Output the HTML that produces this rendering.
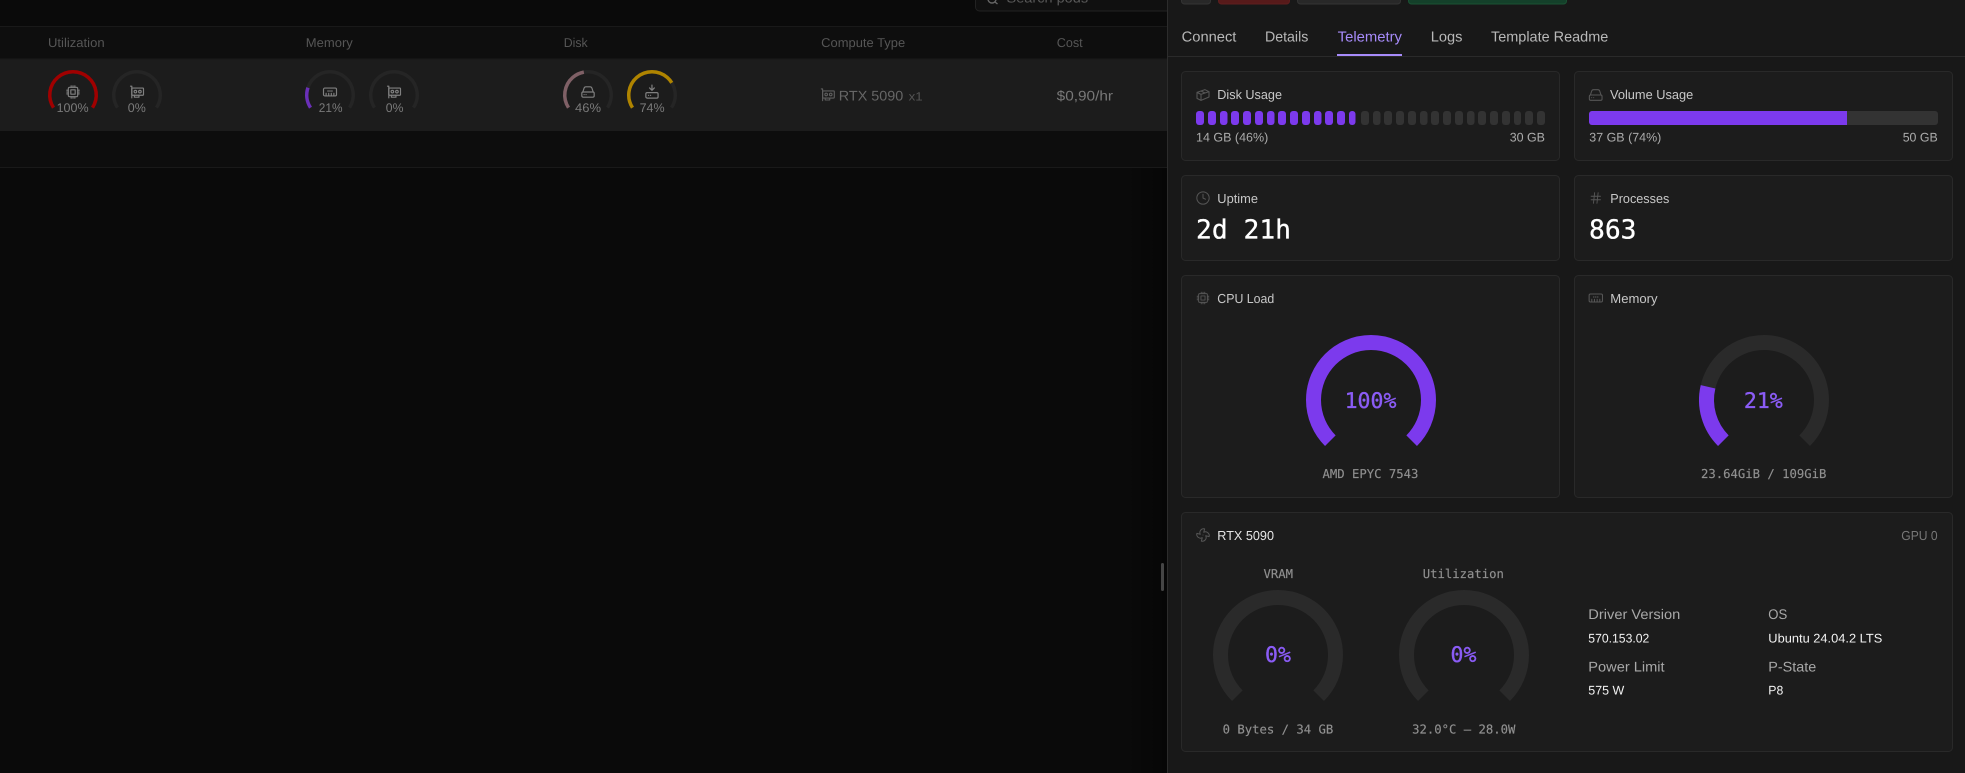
<!DOCTYPE html>
<html lang="en">
<head>
<meta charset="utf-8">
<title>Pod Telemetry</title>
<style>
html,body{margin:0;padding:0;background:#0a0a0a;width:1965px;height:773px;overflow:hidden}
svg{display:block}
text{font-family:"Liberation Sans",sans-serif;text-rendering:geometricPrecision}
.m{font-family:"DejaVu Sans Mono","Liberation Mono",monospace}
.th{font-size:12.8px;fill:#565656}
.pc{font-size:12.5px;fill:#7a7a7a}
.tab{font-size:14.5px;fill:#b8b8b8}
.ttl{font-size:13px;fill:#c8c8c8}
.sub{font-size:12.5px;fill:#ababab}
.val{font-size:26.3px;fill:#fff;stroke:#fff;stroke-width:.3px}
.gv{font-size:21.5px;fill:#8b5cf6;stroke:#8b5cf6;stroke-width:.35px;text-anchor:middle}
.gl{font-size:12.25px;fill:#909090;stroke:#909090;stroke-width:.15px;text-anchor:middle}
.il{font-size:14px;fill:#a8a8a8}
.iv{font-size:12.5px;fill:#f2f2f2}
.card{fill:#1c1c1c;stroke:#292929;stroke-width:1}
.ic{fill:none;stroke-linecap:round;stroke-linejoin:round}
.ir{stroke:#808080;stroke-width:1.8}
.it{stroke:#565656;stroke-width:1.6}
.a{fill:none;stroke-width:3.5}
.A{fill:none;stroke-width:15}
</style>
</head>
<body>
<svg xmlns="http://www.w3.org/2000/svg" width="1965" height="773" viewBox="0 0 1965 773">
<defs>
<g id="cpu"><rect x="4.500" y="4.500" width="15" height="15" rx="2"/><rect x="8.500" y="8.500" width="7" height="7"/><path d="M9 2v2.500M12 2v2.500M15 2v2.500M9 19.500V22M12 19.500V22M15 19.500V22M2 9h2.500M2 12h2.500M2 15h2.500M19.500 9H22M19.500 12H22M19.500 15H22"/></g>
<g id="gpu"><path d="M2 3h2v18"/><rect x="4" y="6" width="18" height="11" rx="1"/><circle cx="9.500" cy="11.500" r="2"/><circle cx="16.500" cy="11.500" r="2"/><path d="M8 17v3h7v-3"/></g>
<g id="mem"><rect x="2" y="6" width="20" height="12" rx="2"/><path d="M6 14v4M10 14v4M14 14v4M18 14v4M9 10v1M12 10v1M15 10v1"/></g>
<g id="hdd"><rect x="2.500" y="12" width="19" height="8" rx="2"/><path d="M4 12l2-6a3 3 0 0 1 3-2h6a3 3 0 0 1 3 2l2 6"/><path d="M6 16h.01M9 16h.01"/></g>
<g id="vol"><path d="M12 2v7M8.500 6l3.500 3.500L15.500 6"/><rect x="3" y="13" width="18" height="8" rx="2"/><path d="M7 17h.01M10 17h.01"/></g>
<g id="box"><path d="M3 8l12-4 6 3v8L9 20l-6-3zM3 8l6 3 12-4M9 11v9M9 6l6 3"/></g>
<g id="clock"><circle cx="12" cy="12" r="10"/><path d="M12 6v6l4 2"/></g>
<g id="hash"><path d="M4 9h16M4 15h16M10 3L8 21M16 3l-2 18"/></g>
<g id="fan"><path d="M10.827 16.379a6.082 6.082 0 0 1-8.618-7.002l5.412 1.45a6.082 6.082 0 0 1 7.002-8.618l-1.45 5.412a6.082 6.082 0 0 1 8.618 7.002l-5.412-1.45a6.082 6.082 0 0 1-7.002 8.618l1.45-5.412Z"/><path d="M12 12v.01"/></g>
<linearGradient id="sh" x1="0" x2="1" y1="0" y2="0"><stop offset="0" stop-color="#000" stop-opacity="0"/><stop offset="1" stop-color="#000" stop-opacity=".4"/></linearGradient>
</defs>

<!-- left background -->
<rect x="0" y="0" width="1167" height="773" fill="#0a0a0a"/>
<rect x="0" y="26" width="1167" height="33" fill="#0e0e0e"/>
<rect x="0" y="59" width="1167" height="72" fill="#1c1c1c"/>
<rect x="0" y="131" width="1167" height="36" fill="#0d0d0d"/>
<path d="M0 26.500H1167M0 59H1167M0 167.500H1167" stroke="#191919" stroke-width="1"/>

<!-- search -->
<rect x="975.500" y="-12" width="200" height="23" rx="4" fill="#101010" stroke="#222"/>
<circle cx="992" cy="-1" r="4" fill="none" stroke="#666" stroke-width="1.400"/>
<path d="M995 2l2.500 2" stroke="#666" stroke-width="1.400" fill="none"/>
<text x="1006.500" y="2.500" font-size="14" fill="#585858" textLength="81.600" lengthAdjust="spacingAndGlyphs">Search pods</text>

<!-- table headers -->
<text class="th" x="48" y="46.800" textLength="56.600" lengthAdjust="spacingAndGlyphs">Utilization</text>
<text class="th" x="305.800" y="46.800" textLength="47" lengthAdjust="spacingAndGlyphs">Memory</text>
<text class="th" x="563.700" y="46.800" textLength="24" lengthAdjust="spacingAndGlyphs">Disk</text>
<text class="th" x="821.200" y="46.800" textLength="84" lengthAdjust="spacingAndGlyphs">Compute Type</text>
<text class="th" x="1056.700" y="46.800" textLength="26" lengthAdjust="spacingAndGlyphs">Cost</text>

<!-- small gauges -->
<g>
<path class="a" stroke="#252525" d="M53.500 107.660A23.250 23.250 0 1 1 92.500 107.660"/>
<path class="a" stroke="#a00000" d="M53.500 107.660A23.250 23.250 0 1 1 92.500 107.660"/>
<path class="a" stroke="#252525" d="M117.500 107.660A23.250 23.250 0 1 1 156.500 107.660"/>
<path class="a" stroke="#252525" d="M310.500 107.660A23.250 23.250 0 1 1 349.500 107.660"/>
<path class="a" stroke="#6a2fb8" pathLength="100" stroke-dasharray="21 200" d="M310.500 107.660A23.250 23.250 0 1 1 349.500 107.660"/>
<path class="a" stroke="#252525" d="M374.500 107.660A23.250 23.250 0 1 1 413.500 107.660"/>
<path class="a" stroke="#252525" d="M568.500 107.660A23.250 23.250 0 1 1 607.500 107.660"/>
<path class="a" stroke="#7f6066" pathLength="100" stroke-dasharray="46 200" d="M568.500 107.660A23.250 23.250 0 1 1 607.500 107.660"/>
<path class="a" stroke="#252525" d="M632.500 107.660A23.250 23.250 0 1 1 671.500 107.660"/>
<path class="a" stroke="#af8400" pathLength="100" stroke-dasharray="74 200" d="M632.500 107.660A23.250 23.250 0 1 1 671.500 107.660"/>
</g>
<g class="ic ir">
<use href="#cpu" transform="translate(65.500 84.500) scale(.625)"/>
<use href="#gpu" transform="translate(129.200 84.200) scale(.65)"/>
<use href="#mem" transform="translate(322.200 84.200) scale(.65)"/>
<use href="#gpu" transform="translate(386.200 84.200) scale(.65)"/>
<use href="#hdd" transform="translate(580.200 84.200) scale(.65)"/>
<use href="#vol" transform="translate(643.800 83.800) scale(.68)"/>
</g>
<text class="pc" x="56.600" y="112" textLength="32" lengthAdjust="spacingAndGlyphs">100%</text>
<text class="pc" x="127.800" y="112" textLength="18" lengthAdjust="spacingAndGlyphs">0%</text>
<text class="pc" x="318.800" y="112" textLength="23.700" lengthAdjust="spacingAndGlyphs">21%</text>
<text class="pc" x="385.800" y="112" textLength="17.600" lengthAdjust="spacingAndGlyphs">0%</text>
<text class="pc" x="575" y="112" textLength="26" lengthAdjust="spacingAndGlyphs">46%</text>
<text class="pc" x="639.600" y="112" textLength="25" lengthAdjust="spacingAndGlyphs">74%</text>

<!-- compute / cost -->
<g class="ic" stroke="#5e5e5e" stroke-width="1.700"><use href="#gpu" transform="translate(820 87) scale(.65)"/></g>
<text x="838.800" y="100.300" font-size="14" fill="#666" textLength="64.500" lengthAdjust="spacingAndGlyphs">RTX 5090</text>
<text x="908.600" y="100.300" font-size="12" fill="#545454" textLength="14" lengthAdjust="spacingAndGlyphs">x1</text>
<text x="1056.700" y="100.300" font-size="14" fill="#787878" textLength="56.300" lengthAdjust="spacingAndGlyphs">$0,90/hr</text>

<!-- shadow + handle -->
<rect x="1125" y="168" width="42" height="605" fill="url(#sh)"/>
<rect x="1161" y="563" width="3" height="28" rx="1.500" fill="#454545"/>

<!-- right panel -->
<rect x="1167" y="0" width="798" height="773" fill="#181818"/>
<path d="M1167.500 0V773" stroke="#2c2c2c"/>
<path d="M1168 56.500H1965" stroke="#2a2a2a"/>

<!-- top buttons -->
<rect x="1181.500" y="-6" width="29" height="10" rx="3" fill="#282828" stroke="#333"/>
<rect x="1218.500" y="-6" width="71" height="10" rx="3" fill="#571a1a" stroke="#5f1e1e"/>
<rect x="1297.500" y="-6" width="103" height="10" rx="3" fill="#282828" stroke="#333"/>
<rect x="1408.500" y="-6" width="158" height="10" rx="3" fill="#14402a" stroke="#1a5233"/>

<!-- tabs -->
<text class="tab" x="1181.700" y="41.700" textLength="54.700" lengthAdjust="spacingAndGlyphs">Connect</text>
<text class="tab" x="1265" y="41.700" textLength="43.300" lengthAdjust="spacingAndGlyphs">Details</text>
<text class="tab" x="1337.700" y="41.700" textLength="64.300" lengthAdjust="spacingAndGlyphs" style="fill:#a78bfa">Telemetry</text>
<text class="tab" x="1430.700" y="41.700" textLength="31.700" lengthAdjust="spacingAndGlyphs">Logs</text>
<text class="tab" x="1491" y="41.700" textLength="117.300" lengthAdjust="spacingAndGlyphs">Template Readme</text>
<rect x="1337" y="54" width="65" height="2" fill="#a78bfa"/>

<!-- cards -->
<rect class="card" x="1181.500" y="71.500" width="378" height="89" rx="4"/>
<rect class="card" x="1574.500" y="71.500" width="378" height="89" rx="4"/>
<rect class="card" x="1181.500" y="175.500" width="378" height="85" rx="4"/>
<rect class="card" x="1574.500" y="175.500" width="378" height="85" rx="4"/>
<rect class="card" x="1181.500" y="275.500" width="378" height="222" rx="4"/>
<rect class="card" x="1574.500" y="275.500" width="378" height="222" rx="4"/>
<rect class="card" x="1181.500" y="512.500" width="771" height="239" rx="4"/>

<!-- card icons -->
<g class="ic it">
<use href="#box" transform="translate(1195 87) scale(.667)"/>
<use href="#hdd" transform="translate(1587.700 87) scale(.667)"/>
<use href="#clock" transform="translate(1195.600 190.600) scale(.617)"/>
<use href="#hash" transform="translate(1588.800 191) scale(.583)"/>
<use href="#cpu" transform="translate(1196 291) scale(.583)"/>
<use href="#mem" transform="translate(1587.800 290) scale(.667)"/>
<use href="#fan" transform="translate(1195.500 527.500) scale(.625)"/>
</g>

<!-- titles -->
<text class="ttl" x="1217.300" y="98.800" textLength="64.700" lengthAdjust="spacingAndGlyphs">Disk Usage</text>
<text class="ttl" x="1610" y="98.800" textLength="83.300" lengthAdjust="spacingAndGlyphs">Volume Usage</text>
<text class="ttl" x="1217.300" y="202.800" textLength="40.700" lengthAdjust="spacingAndGlyphs">Uptime</text>
<text class="ttl" x="1610.300" y="202.800" textLength="59" lengthAdjust="spacingAndGlyphs">Processes</text>
<text class="ttl" x="1217.300" y="302.800" textLength="57" lengthAdjust="spacingAndGlyphs">CPU Load</text>
<text class="ttl" x="1610.300" y="302.800" textLength="47.300" lengthAdjust="spacingAndGlyphs">Memory</text>
<text class="ttl" x="1217.300" y="539.800" textLength="56.700" lengthAdjust="spacingAndGlyphs" style="fill:#e4e4e4">RTX 5090</text>
<text x="1901.300" y="539.800" font-size="13" fill="#777" textLength="36.300" lengthAdjust="spacingAndGlyphs">GPU 0</text>

<!-- disk segmented bar -->
<g fill="#7c3aed">
<rect x="1196" y="111" width="8" height="14" rx="3"/><rect x="1208" y="111" width="8" height="14" rx="3"/><rect x="1220" y="111" width="7.500" height="14" rx="3"/><rect x="1231" y="111" width="8" height="14" rx="3"/><rect x="1243" y="111" width="8" height="14" rx="3"/><rect x="1255" y="111" width="8" height="14" rx="3"/><rect x="1267" y="111" width="7.500" height="14" rx="3"/><rect x="1278" y="111" width="8" height="14" rx="3"/><rect x="1290" y="111" width="8" height="14" rx="3"/><rect x="1302" y="111" width="8" height="14" rx="3"/><rect x="1314" y="111" width="7.500" height="14" rx="3"/><rect x="1325" y="111" width="8" height="14" rx="3"/><rect x="1337" y="111" width="8" height="14" rx="3"/><rect x="1349" y="111" width="6.500" height="14" rx="3"/>
</g>
<g fill="#333">
<rect x="1361" y="111" width="8" height="14" rx="3"/><rect x="1373" y="111" width="7.500" height="14" rx="3"/><rect x="1384" y="111" width="8" height="14" rx="3"/><rect x="1396" y="111" width="8" height="14" rx="3"/><rect x="1408" y="111" width="8" height="14" rx="3"/><rect x="1420" y="111" width="7.500" height="14" rx="3"/><rect x="1431" y="111" width="8" height="14" rx="3"/><rect x="1443" y="111" width="8" height="14" rx="3"/><rect x="1455" y="111" width="8" height="14" rx="3"/><rect x="1467" y="111" width="7.500" height="14" rx="3"/><rect x="1478" y="111" width="8" height="14" rx="3"/><rect x="1490" y="111" width="8" height="14" rx="3"/><rect x="1502" y="111" width="8" height="14" rx="3"/><rect x="1514" y="111" width="7" height="14" rx="3"/><rect x="1525" y="111" width="8" height="14" rx="3"/><rect x="1537" y="111" width="8" height="14" rx="3"/>
</g>
<text class="sub" x="1196" y="141.300" textLength="72.300" lengthAdjust="spacingAndGlyphs">14 GB (46%)</text>
<text class="sub" x="1509.700" y="141.300" textLength="35.300" lengthAdjust="spacingAndGlyphs">30 GB</text>

<!-- volume bar -->
<rect x="1589" y="111" width="349" height="14" rx="3" fill="#333"/>
<path d="M1592 111H1847V125H1592a3 3 0 0 1-3-3V114a3 3 0 0 1 3-3z" fill="#7c3aed"/>
<text class="sub" x="1589.300" y="141.300" textLength="72" lengthAdjust="spacingAndGlyphs">37 GB (74%)</text>
<text class="sub" x="1902.700" y="141.300" textLength="35" lengthAdjust="spacingAndGlyphs">50 GB</text>

<!-- values -->
<text class="m val" x="1196" y="238.300">2d 21h</text>
<text class="m val" x="1589" y="238.300">863</text>

<!-- big gauges -->
<path class="A" stroke="#7c3aed" d="M1330.340 440.660A57.500 57.500 0 1 1 1411.660 440.660"/>
<text class="m gv" x="1370.500" y="407.900">100%</text>
<text class="m gl" x="1370.500" y="478">AMD EPYC 7543</text>

<path class="A" stroke="#2a2a2a" d="M1723.340 440.660A57.500 57.500 0 1 1 1804.660 440.660"/>
<path class="A" stroke="#7c3aed" pathLength="100" stroke-dasharray="21.600 200" d="M1723.340 440.660A57.500 57.500 0 1 1 1804.660 440.660"/>
<text class="m gv" x="1763.300" y="407.900">21%</text>
<text class="m gl" x="1763.700" y="478">23.64GiB / 109GiB</text>

<text class="m gl" x="1278.200" y="578">VRAM</text>
<path class="A" stroke="#2a2a2a" d="M1237.340 695.660A57.500 57.500 0 1 1 1318.660 695.660"/>
<text class="m gv" x="1278" y="661.900">0%</text>
<text class="m gl" x="1278" y="733.400">0 Bytes / 34 GB</text>

<text class="m gl" x="1463.300" y="578">Utilization</text>
<path class="A" stroke="#2a2a2a" d="M1423.340 695.660A57.500 57.500 0 1 1 1504.660 695.660"/>
<text class="m gv" x="1463.500" y="661.900">0%</text>
<text class="m gl" x="1463.700" y="733.400">32.0°C – 28.0W</text>

<!-- GPU info -->
<text class="il" x="1588.300" y="619" textLength="92" lengthAdjust="spacingAndGlyphs">Driver Version</text>
<text class="iv" x="1588.300" y="642.300" textLength="61" lengthAdjust="spacingAndGlyphs">570.153.02</text>
<text class="il" x="1588.300" y="671.700" textLength="76.300" lengthAdjust="spacingAndGlyphs">Power Limit</text>
<text class="iv" x="1588.300" y="694.300" textLength="36" lengthAdjust="spacingAndGlyphs">575 W</text>
<text class="il" x="1768.300" y="619" textLength="19" lengthAdjust="spacingAndGlyphs">OS</text>
<text class="iv" x="1768.300" y="642.300" textLength="114" lengthAdjust="spacingAndGlyphs">Ubuntu 24.04.2 LTS</text>
<text class="il" x="1768.300" y="671.700" textLength="48" lengthAdjust="spacingAndGlyphs">P-State</text>
<text class="iv" x="1768.300" y="694.300" textLength="15" lengthAdjust="spacingAndGlyphs">P8</text>
</svg>
</body>
</html>
